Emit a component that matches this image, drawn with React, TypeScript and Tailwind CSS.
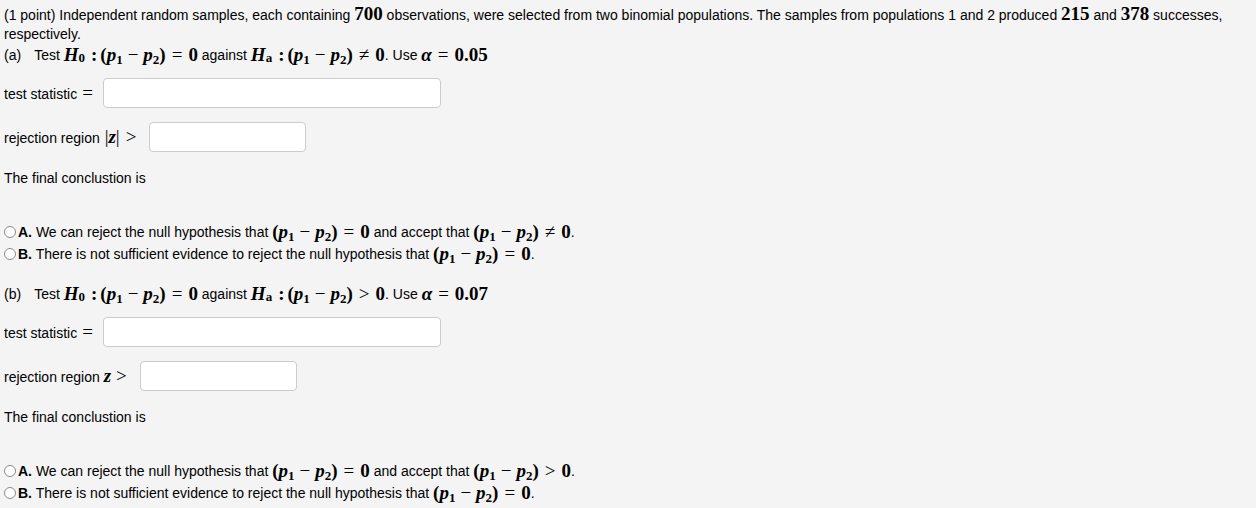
import React from 'react'

const serif = "font-['Liberation_Serif','DejaVu_Serif',serif]"

function V({ children }: { children: React.ReactNode }) {
  return <span className={`${serif} italic font-bold text-[19px]`}>{children}</span>
}

function N({ children }: { children: React.ReactNode }) {
  return <span className={`${serif} font-bold text-[19px]`}>{children}</span>
}

function Op({ children }: { children: React.ReactNode }) {
  return <span className={`${serif} text-[19px] mx-[6px]`}>{children}</span>
}

function Colon() {
  return <span className={`${serif} font-bold text-[19px] ml-[6px] mr-[3px]`}>:</span>
}

function Minus() {
  return <span className={`${serif} text-[19px] mx-[5px]`}>−</span>
}

function Sub({ children }: { children: React.ReactNode }) {
  return <span className={`${serif} font-bold text-[13px] relative top-[3px]`}>{children}</span>
}

// (p1 − p2)
function Diff() {
  return (
    <span className="whitespace-nowrap">
      <N>(</N>
      <V>p</V>
      <Sub>1</Sub>
      <Minus />
      <V>p</V>
      <Sub>2</Sub>
      <N>)</N>
    </span>
  )
}

function Hyp({ label, rel, alpha }: { label: string; rel: string; alpha: string }) {
  return (
    <div className="h-[24px] flex items-center whitespace-pre">
      <span className="mr-[13px]">{label}</span>
      <span>Test </span>
      <V>H</V>
      <Sub>0</Sub>
      <Colon />
      <Diff />
      <Op>=</Op>
      <N>0</N>
      <span> against </span>
      <V>H</V>
      <Sub>a</Sub>
      <Colon />
      <Diff />
      <Op>{rel}</Op>
      <N>0</N>
      <span>. Use </span>
      <V>α</V>
      <Op>=</Op>
      <N>{alpha}</N>
    </div>
  )
}

function Field({ label, width, gap }: { label: React.ReactNode; width: string; gap: string }) {
  return (
    <div className="flex items-center h-[30px]">
      <span className={`whitespace-pre ${gap}`}>{label}</span>
      <div className={`h-[30px] ${width} bg-white border border-[#cccccc] rounded-[4px]`} />
    </div>
  )
}

function Radio() {
  return (
    <span className="inline-block w-[12px] h-[12px] rounded-full border border-[#8a8a8a] bg-white mr-[2px] shrink-0" />
  )
}

function Options({ rel }: { rel: string }) {
  return (
    <div className="flex flex-col">
      <div className="h-[22px] flex items-center">
        <Radio />
        <b>A.</b>
        <span className="whitespace-pre"> We can reject the null hypothesis that </span>
        <Diff />
        <Op>=</Op>
        <N>0</N>
        <span className="whitespace-pre"> and accept that </span>
        <Diff />
        <Op>{rel}</Op>
        <N>0</N>
        <span>.</span>
      </div>
      <div className="h-[22px] flex items-center">
        <Radio />
        <b>B.</b>
        <span className="whitespace-pre"> There is not sufficient evidence to reject the null hypothesis that </span>
        <Diff />
        <Op>=</Op>
        <N>0</N>
        <span>.</span>
      </div>
    </div>
  )
}

function Part({
  label,
  rel,
  alpha,
  region,
}: {
  label: string
  rel: string
  alpha: string
  region: React.ReactNode
}) {
  return (
    <div>
      <Hyp label={label} rel={rel} alpha={alpha} />
      <div className="mt-[11px]">
        <Field
          label={
            <span>
              test statistic<span className={`${serif} text-[19px] ml-[5px]`}>=</span>
            </span>
          }
          width="w-[338px]"
          gap="mr-[10px]"
        />
      </div>
      <div className="mt-[14px]">{region}</div>
      <div className="mt-[17px] h-[18px] leading-[18px]">The final conclustion is</div>
      <div className="mt-[34px]">
        <Options rel={rel} />
      </div>
    </div>
  )
}

export default function App() {
  return (
    <div className="w-[1256px] h-[508px] bg-[#f4f4f4] text-[14px] text-black font-['Liberation_Sans',Arial,sans-serif] px-[4px] pt-[4px] overflow-hidden">
      <p className="leading-[19px]">
        (1 point) Independent random samples, each containing <N>700</N> observations, were selected from two
        binomial populations. The samples from populations 1 and 2 produced <N>215</N> and <N>378</N> successes,
        respectively.
      </p>
      <div className="mt-[-1px]">
        <Part
          label="(a)"
          rel="≠"
          alpha="0.05"
          region={
            <Field
              label={
                <span>
                  rejection region <span className={`${serif} text-[19px] ml-[1px]`}>|</span>
                  <V>z</V>
                  <span className={`${serif} text-[19px]`}>|</span>
                  <span className={`${serif} text-[19px] ml-[6px]`}>&gt;</span>
                </span>
              }
              width="w-[157px]"
              gap="mr-[13px]"
            />
          }
        />
      </div>
      <div className="mt-[17px]">
        <Part
          label="(b)"
          rel=">"
          alpha="0.07"
          region={
            <Field
              label={
                <span>
                  rejection region <V>z</V>
                  <span className={`${serif} text-[19px] ml-[5px]`}>&gt;</span>
                </span>
              }
              width="w-[157px]"
              gap="mr-[13px]"
            />
          }
        />
      </div>
    </div>
  )
}
